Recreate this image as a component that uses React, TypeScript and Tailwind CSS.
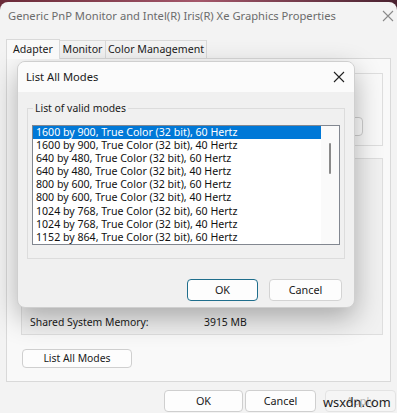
import React from 'react';

const modes = [
    '1600 by 900, True Color (32 bit), 60 Hertz',
    '1600 by 900, True Color (32 bit), 40 Hertz',
    '640 by 480, True Color (32 bit), 60 Hertz',
    '640 by 480, True Color (32 bit), 40 Hertz',
    '800 by 600, True Color (32 bit), 60 Hertz',
    '800 by 600, True Color (32 bit), 40 Hertz',
    '1024 by 768, True Color (32 bit), 60 Hertz',
    '1024 by 768, True Color (32 bit), 40 Hertz',
    '1152 by 864, True Color (32 bit), 60 Hertz',
];

const CloseIcon: React.FC<{ className?: string }> = ({ className }) => (
    <svg width="12" height="12" viewBox="0 0 12 12" className={className}>
        <path d="M1 1 L11 11 M11 1 L1 11" stroke="currentColor" strokeWidth="1.1" fill="none" />
    </svg>
);

const ListAllModesDialog: React.FC = () => (
    <div className="absolute left-[17px] top-[61px] w-[338px] h-[247px] rounded-[8px] overflow-hidden bg-[#f0f0f0] border border-[#cfcfcf] shadow-[0_10px_28px_rgba(0,0,0,0.3)] flex flex-col">
        {/* Title */}
        <div className="h-[30px] bg-[#fbfbfb] flex items-center justify-between pl-[8px] pr-[9px] shrink-0">
            <span className="text-[11.2px] text-[#1a1a1a]">List All Modes</span>
            <CloseIcon className="text-[#222]" />
        </div>

        {/* Body */}
        <div className="flex-1 flex flex-col px-[9px] pt-[16px]">
            <div className="relative border border-[#dcdcdc] h-[151px] pt-[16px] px-[4px]">
                <span className="absolute left-[5px] -top-[9px] px-[2px] bg-[#f0f0f0] text-[10.4px] leading-[16px] text-[#1a1a1a]">List of valid modes</span>
                <div className="h-[120px] bg-white border border-[#828790] flex">
                    <div className="flex-1 flex flex-col">
                        {modes.map((m, i) => (
                            <div
                                key={m}
                                className={`h-[13.1px] leading-[13px] pl-[3px] text-[10.6px] whitespace-nowrap ${i === 0 ? 'bg-[#0078d7] text-white' : 'text-[#111]'}`}
                            >
                                {m}
                            </div>
                        ))}
                    </div>
                    <div className="w-[18px] bg-[#fafafa] flex justify-center pt-[17px]">
                        <div className="w-[2px] h-[31px] rounded-full bg-[#8a8a8a]" />
                    </div>
                </div>
            </div>

            <div className="flex justify-end gap-[11px] mt-[20px] pr-[3px] text-[10.8px] text-[#1a1a1a]">
                <button className="w-[71px] h-[22px] rounded-[4px] bg-[#fdfdfd] border border-[#1f6e8c]">OK</button>
                <button className="w-[73px] h-[22px] rounded-[4px] bg-[#fdfdfd] border border-[#d3d3d3]">Cancel</button>
            </div>
        </div>
    </div>
);

const App: React.FC = () => {
    return (
        <div className="relative w-[397px] h-[413px] overflow-hidden bg-gradient-to-r from-[#6a2a38] via-[#a4576a] to-[#4a2230] font-['Noto_Sans','Liberation_Sans',sans-serif]">
            {/* Parent window */}
            <div className="mt-[2px] h-[411px] rounded-tl-[8px] rounded-tr-[8px] bg-[#f3f3f3] flex flex-col">
                {/* Title bar */}
                <div className="h-[28px] flex items-center justify-between pl-[8px] pr-[3px] shrink-0">
                    <span className="text-[11.2px] text-[#6b6b6b] whitespace-nowrap">Generic PnP Monitor and Intel(R) Iris(R) Xe Graphics Properties</span>
                    <CloseIcon className="text-[#8a8a8a]" />
                </div>

                {/* Tabs */}
                <div className="flex items-end pl-[6px] mt-[8px] h-[20px] shrink-0 text-[10.6px] text-[#1a1a1a]">
                    <div className="w-[54px] h-[20px] bg-[#f9f9f9] border border-b-0 border-[#d9d9d9] flex items-center justify-center relative z-10 -mb-[1px]">Adapter</div>
                    <div className="w-[46px] h-[18px] border-t border-r border-[#d9d9d9] flex items-center justify-center">Monitor</div>
                    <div className="w-[101px] h-[18px] border-t border-r border-[#d9d9d9] flex items-center justify-center">Color Management</div>
                </div>

                {/* Tab panel */}
                <div className="ml-[6px] w-[385px] h-[324px] bg-[#f9f9f9] border border-[#d9d9d9] flex flex-col pl-[14px] pr-[7px] pt-[14px] text-[10.4px] text-[#1a1a1a]">
                    <div className="h-[73px] border border-[#dedede] flex justify-end items-start pt-[43px] pr-[19px]">
                        <button className="w-[70px] h-[19px] rounded-[4px] bg-[#fdfdfd] border border-[#cfcfcf]" />
                    </div>
                    <div className="mt-[12px] h-[177px] border border-[#dedede] bg-[#f1f1f1] flex flex-col justify-end pb-[3px] pl-[8px]">
                        <div className="flex h-[16px] items-center">
                            <span className="w-[174px]">Shared System Memory:</span>
                            <span>3915 MB</span>
                        </div>
                    </div>
                    <div className="mt-[14px]">
                        <button className="ml-[1px] w-[110px] h-[19px] rounded-[4px] bg-[#fdfdfd] border border-[#cfcfcf] text-[10.4px] text-[#1a1a1a]">List All Modes</button>
                    </div>
                </div>

                {/* Bottom buttons */}
                <div className="flex justify-end mt-[8px] pr-[1px] text-[10.8px]">
                    <button className="w-[79px] h-[22px] rounded-[4px] bg-[#fdfdfd] border border-[#cfcfcf] text-[#1a1a1a]">OK</button>
                    <button className="ml-[2px] w-[71px] h-[22px] rounded-[4px] bg-[#fdfdfd] border border-[#cfcfcf] text-[#1a1a1a]">Cancel</button>
                    <button className="ml-[9px] w-[71px] h-[22px] rounded-[4px] bg-[#f5f5f5] border border-[#e3e3e3] text-[#b5b5b5]">Apply</button>
                </div>
            </div>

            <ListAllModesDialog />

            {/* Watermark */}
            <span className="absolute left-[323px] top-[393px] text-[12.8px] leading-[18px] text-[#222]">wsxdn.com</span>
        </div>
    );
};

export default App;
